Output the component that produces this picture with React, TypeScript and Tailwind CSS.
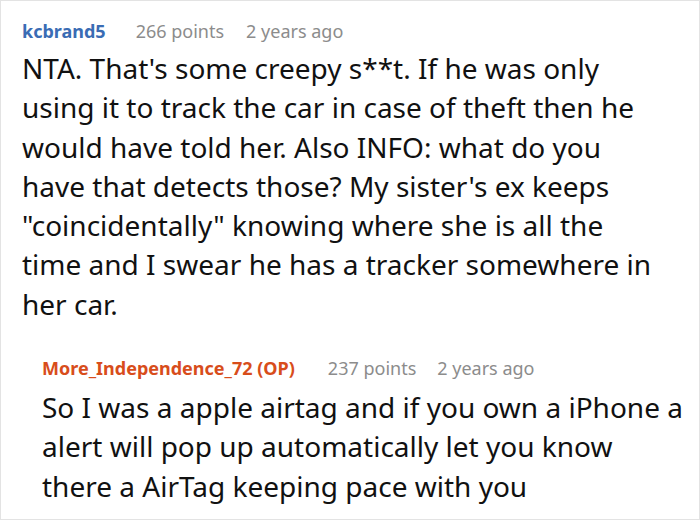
import React from "react";

export default function App() {
  const font = { fontFamily: '"Noto Sans", "Open Sans", sans-serif' };
  return (
    <div
      className="w-[700px] h-[520px] bg-white border border-[#e3e3e3] overflow-hidden px-[21px] pt-[17px]"
      style={font}
    >
      <div className="flex items-center text-[18px] leading-[27px]">
        <span className="font-bold text-[#3a6cb4]">kcbrand5</span>
        <span className="ml-[30px] text-[#8c8c8c]">266 points</span>
        <span className="ml-[22px] text-[#8c8c8c]">2 years ago</span>
      </div>
      <p className="mt-[4px] text-[28px] leading-[39.3px] text-[#111] w-[636px]">
        NTA. That's some creepy s**t. If he was only using it to track the car in case of theft then he would have told her. Also INFO: what do you have that detects those? My sister's ex keeps "coincidentally" knowing where she is all the time and I swear he has a tracker somewhere in her car.
      </p>
      <div className="mt-[31px] flex">
        <div className="w-[2px] bg-[#e6e6e6] mt-[12px] mb-[4px]" />
        <div className="pl-[20px]">
          <div className="flex items-center text-[18px] leading-[27px]">
            <span className="font-bold text-[#d84d1b]">More_Independence_72 (OP)</span>
            <span className="ml-[33px] text-[#8c8c8c]">237 points</span>
            <span className="ml-[21px] text-[#8c8c8c]">2 years ago</span>
          </div>
          <p className="mt-[6px] text-[28px] leading-[39.3px] text-[#111] w-[643px]">
            So I was a apple airtag and if you own a iPhone a alert will pop up automatically let you know there a AirTag keeping pace with you
          </p>
        </div>
      </div>
    </div>
  );
}
